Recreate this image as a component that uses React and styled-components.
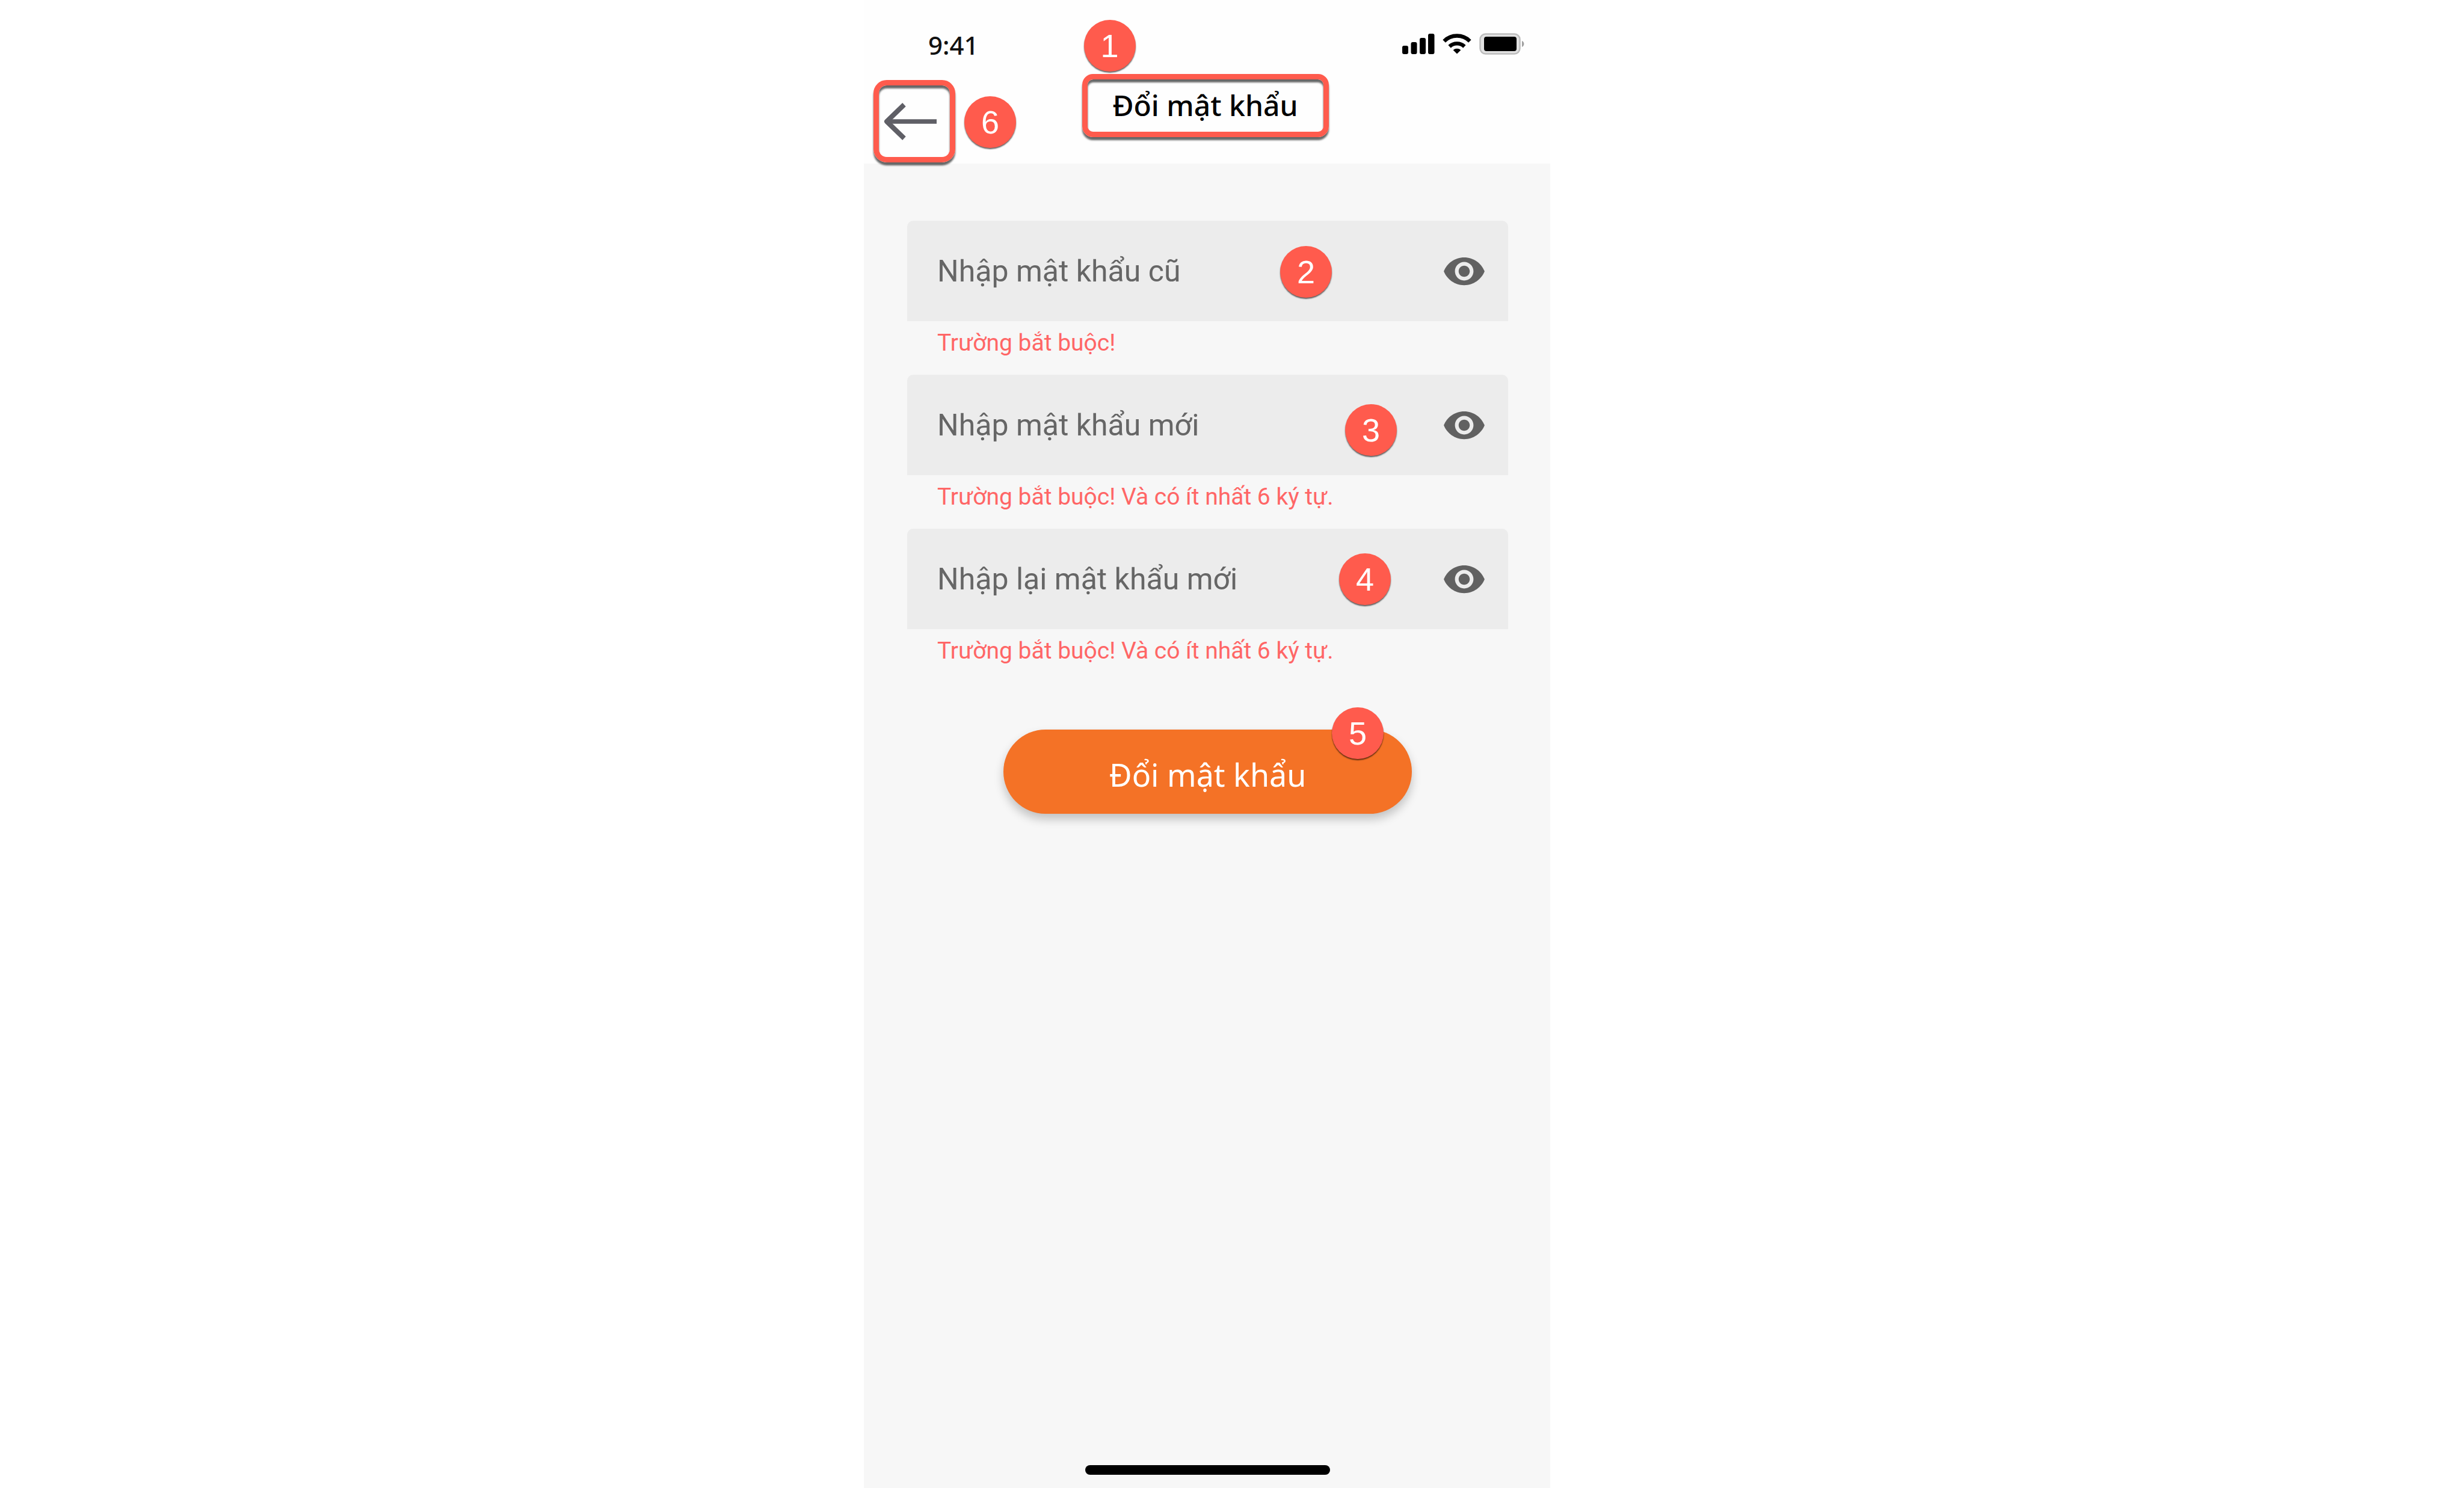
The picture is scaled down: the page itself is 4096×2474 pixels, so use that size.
import React, { useState } from "react";
import styled, { createGlobalStyle } from "styled-components";
import { MdVisibility } from "react-icons/md";

const GlobalStyle = createGlobalStyle`
  *, *::before, *::after { box-sizing: border-box; }
  body {
    margin: 0;
    background: #ffffff;
    font-family: Roboto, "Liberation Sans", sans-serif;
  }
  button, input { font: inherit; }
`;

const Page = styled.div`
  display: flex;
  justify-content: center;
  min-height: 100vh;
  padding-right: 83px;
`;

const Phone = styled.div`
  display: flex;
  flex-direction: column;
  width: 100%;
  max-width: 1141px;
  background: #f7f7f7;
`;

const Header = styled.header`
  background: #fefefe;
  padding-bottom: 2px;
`;

const StatusBar = styled.div`
  display: flex;
  align-items: center;
  justify-content: space-between;
  height: 123px;
  padding: 22px 42px 0 107px;
`;

const Time = styled.span`
  padding-top: 4px;
  color: #111111;
  font-family: "Noto Sans", sans-serif;
  font-size: 42px;
  font-weight: 500;
  line-height: 60px;
`;

const StatusIcons = styled.div`
  display: flex;
  align-items: center;
  gap: 13px;

  svg { display: block; }
`;

const NavBar = styled.div`
  display: grid;
  grid-template-columns: 1fr auto 1fr;
  align-items: start;
  padding: 0 22px 0 16px;
`;

const BackSlot = styled.div`
  position: relative;
  justify-self: start;
  padding-top: 10px;
`;

const BackButton = styled.button`
  display: flex;
  align-items: center;
  width: 136px;
  height: 137px;
  padding: 0 0 0 7px;
  border: 9px solid #ff5b4d;
  border-radius: 22px;
  background: transparent;
  box-shadow: 0 5px 3px rgba(0, 0, 0, 0.6), inset 0 5px 3px rgba(0, 0, 0, 0.6);
  cursor: pointer;
`;

const TitleSlot = styled.div`
  position: relative;
`;

const TitleFrame = styled.div`
  display: flex;
  justify-content: center;
  width: 410px;
  height: 105px;
  border: 9px solid #ff5b4d;
  border-radius: 18px;
  box-shadow: 0 5px 3px rgba(0, 0, 0, 0.6), inset 0 5px 3px rgba(0, 0, 0, 0.6);
`;

const Title = styled.h1`
  margin: 0;
  color: #000000;
  font-family: "Noto Sans", sans-serif;
  font-size: 48px;
  font-weight: 500;
  line-height: 86px;
  white-space: nowrap;
`;

const Badge = styled.span`
  position: absolute;
  top: ${(p) => p.$top}px;
  ${(p) => (p.$left !== undefined ? `left: ${p.$left}px;` : `right: ${p.$right}px;`)}
  display: flex;
  align-items: center;
  justify-content: center;
  width: 86px;
  height: 86px;
  border-radius: 50%;
  background: #ff5b4d;
  box-shadow: 0 2px 2px rgba(0, 0, 0, 0.6);
  color: #ffffff;
  font-family: "Liberation Sans", Arial, sans-serif;
  font-size: 54px;
  line-height: 86px;
  pointer-events: none;
`;

const Form = styled.form`
  display: flex;
  flex: 1;
  flex-direction: column;
  padding: 95px 70px 22px 72px;
`;

const Field = styled.div`
  display: flex;
  flex-direction: column;
  height: 256px;
`;

const InputBox = styled.div`
  position: relative;
  display: flex;
  align-items: center;
  height: 167px;
  padding: 0 36px 0 50px;
  border-radius: 10px 10px 0 0;
  background: #ececec;
`;

const Input = styled.input`
  flex: 1;
  min-width: 0;
  height: 167px;
  padding: 0;
  border: 0;
  outline: 0;
  background: transparent;
  color: #666666;
  font-size: 50px;

  &::placeholder { color: #666666; opacity: 1; }
`;

const EyeButton = styled.button`
  display: flex;
  padding: 0;
  border: 0;
  background: transparent;
  color: #616161;
  cursor: pointer;
`;

const Hint = styled.p`
  margin: 0;
  padding: 8px 50px 0;
  color: #ff6666;
  font-size: 39px;
  line-height: 56px;
`;

const Submit = styled.button`
  position: relative;
  align-self: center;
  width: 679px;
  height: 140px;
  margin-top: 78px;
  padding: 8px 0 0;
  border: 0;
  border-radius: 70px;
  background: #f47226;
  box-shadow: 0 9px 16px rgba(0, 0, 0, 0.22);
  color: #ffffff;
  font-family: "Noto Sans", sans-serif;
  font-size: 52px;
  cursor: pointer;
`;

const HomeIndicator = styled.div`
  align-self: center;
  width: 407px;
  height: 16px;
  margin-top: auto;
  border-radius: 8px;
  background: #000000;
`;

const FIELDS = [
  {
    id: "old",
    placeholder: "Nhập mật khẩu cũ",
    hint: "Trường bắt buộc!",
    badge: { label: "2", top: 42, right: 293 },
  },
  {
    id: "new",
    placeholder: "Nhập mật khẩu mới",
    hint: "Trường bắt buộc! Và có ít nhất 6 ký tự.",
    badge: { label: "3", top: 49, right: 185 },
  },
  {
    id: "repeat",
    placeholder: "Nhập lại mật khẩu mới",
    hint: "Trường bắt buộc! Và có ít nhất 6 ký tự.",
    badge: { label: "4", top: 41, right: 195 },
  },
];

function SignalIcon() {
  return (
    <svg width="54" height="34" viewBox="0 0 54 34" aria-hidden="true">
      <rect x="0" y="20" width="10" height="14" rx="3" />
      <rect x="14.5" y="14" width="10" height="20" rx="3" />
      <rect x="29" y="7" width="10" height="27" rx="3" />
      <rect x="43" y="0" width="10.5" height="34" rx="3" />
    </svg>
  );
}

function WifiIcon() {
  return (
    <svg width="48" height="34" viewBox="0 0 48 34" aria-hidden="true">
      <g fill="none" stroke="#000" strokeWidth="6.4">
        <path d="M2.6 12.4C14.5 .6 33.5 .6 45.4 12.4" />
        <path d="M11.6 21.4C18.5 14.7 29.5 14.7 36.4 21.4" />
      </g>
      <path d="M17.6 27.2C21.3 23.9 26.7 23.9 30.4 27.2L24 33.6Z" />
    </svg>
  );
}

function BatteryIcon() {
  return (
    <svg width="76" height="36" viewBox="0 0 76 36" aria-hidden="true">
      <rect x="1.5" y="1.5" width="66" height="33" rx="9" fill="#e2e2e2" stroke="#bdbdbd" strokeWidth="2.5" />
      <rect x="8" y="6" width="54" height="24" rx="4" />
      <path d="M71 13C75.500 14.5 75.5 21.5 71 23Z" fill="#a0a0a0" />
    </svg>
  );
}

function ArrowIcon() {
  return (
    <svg width="90" height="64" viewBox="0 0 90 64" aria-hidden="true">
      <g fill="none" stroke="#5f5f66" strokeWidth="7.5">
        <path d="M6 32H89" />
        <path d="M35 4L6 32L35 60" strokeWidth="8" strokeLinejoin="round" />
      </g>
    </svg>
  );
}

function PasswordField({ id, placeholder, hint, badge }) {
  const [shown, setShown] = useState(false);
  return (
    <Field>
      <InputBox>
        <Input
          id={id}
          type={shown ? "text" : "password"}
          placeholder={placeholder}
          aria-label={placeholder}
          aria-describedby={`${id}-hint`}
        />
        <EyeButton type="button" aria-label="Hiện mật khẩu" onClick={() => setShown(!shown)}>
          <MdVisibility size={74} />
        </EyeButton>
        <Badge $top={badge.top} $right={badge.right}>{badge.label}</Badge>
      </InputBox>
      <Hint id={`${id}-hint`}>{hint}</Hint>
    </Field>
  );
}

export default function App() {
  return (
    <>
      <GlobalStyle />
      <Page>
        <Phone>
          <Header>
            <StatusBar>
              <Time>9:41</Time>
              <StatusIcons>
                <SignalIcon />
                <WifiIcon />
                <BatteryIcon />
              </StatusIcons>
            </StatusBar>
            <NavBar>
              <BackSlot>
                <BackButton type="button" aria-label="Quay lại">
                  <ArrowIcon />
                </BackButton>
                <Badge $top={37} $left={151}>6</Badge>
              </BackSlot>
              <TitleSlot>
                <TitleFrame>
                  <Title>Đổi mật khẩu</Title>
                </TitleFrame>
                <Badge $top={-90} $left={3}>1</Badge>
              </TitleSlot>
            </NavBar>
          </Header>
          <Form onSubmit={(e) => e.preventDefault()}>
            {FIELDS.map((field) => (
              <PasswordField key={field.id} {...field} />
            ))}
            <Submit type="submit">
              Đổi mật khẩu
              <Badge $top={-37} $right={47}>5</Badge>
            </Submit>
            <HomeIndicator />
          </Form>
        </Phone>
      </Page>
    </>
  );
}
